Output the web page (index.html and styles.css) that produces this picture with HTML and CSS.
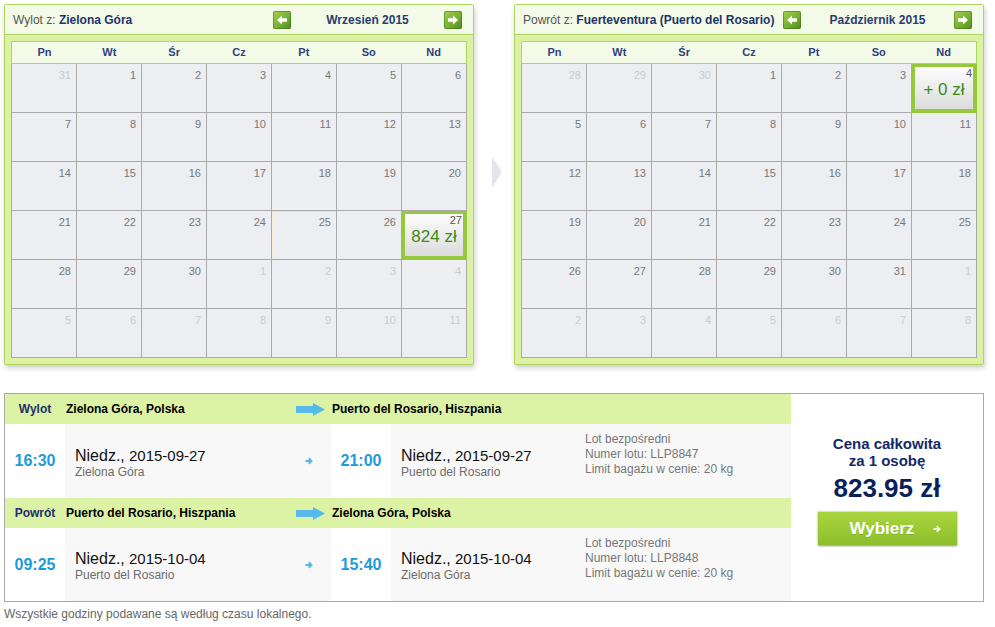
FILE: index.html
```html
<!DOCTYPE html>
<html lang="pl">
<head>
  <meta charset="UTF-8">
  <meta name="viewport" content="width=device-width, initial-scale=1.0">
  <title>Wybór lotu</title>
  <link rel="stylesheet" href="styles.css">
</head>

<body>
  <div class="calendars">
    <!-- wylot -->
    <div class="cal">
      <div class="cal-head">
        <div class="cal-title"><span class="cal-label">Wylot z:</span> <b>Zielona Góra</b></div>
        <div class="cal-nav">
          <span class="nav-btn"><svg width="18" height="18" viewBox="0 0 18 18"><polygon points="4,9 9,4.5 9,7.3 14,7.3 14,10.7 9,10.7 9,13.5" fill="#fff"/></svg></span>
          <span class="cal-month">Wrzesień 2015</span>
          <span class="nav-btn"><svg width="18" height="18" viewBox="0 0 18 18"><polygon points="14,9 9,4.5 9,7.3 4,7.3 4,10.7 9,10.7 9,13.5" fill="#fff"/></svg></span>
        </div>
      </div>
      <div class="cal-body">
        <div class="cal-days">
          <span>Pn</span><span>Wt</span><span>Śr</span><span>Cz</span><span>Pt</span><span>So</span><span>Nd</span>
        </div>
        <div class="cal-grid">
          <div class="day other">31</div><div class="day">1</div><div class="day">2</div><div class="day">3</div><div class="day">4</div><div class="day">5</div><div class="day">6</div>
          <div class="day">7</div><div class="day">8</div><div class="day">9</div><div class="day">10</div><div class="day">11</div><div class="day">12</div><div class="day">13</div>
          <div class="day">14</div><div class="day">15</div><div class="day">16</div><div class="day">17</div><div class="day">18</div><div class="day">19</div><div class="day">20</div>
          <div class="day">21</div><div class="day">22</div><div class="day">23</div><div class="day">24</div><div class="day today">25</div><div class="day">26</div>
          <div class="day picked"><span class="num">27</span><span class="fare">824 zł</span></div>
          <div class="day">28</div><div class="day">29</div><div class="day">30</div><div class="day other">1</div><div class="day other">2</div><div class="day other">3</div><div class="day other">4</div>
          <div class="day other">5</div><div class="day other">6</div><div class="day other">7</div><div class="day other">8</div><div class="day other">9</div><div class="day other">10</div><div class="day other">11</div>
        </div>
      </div>
    </div>

    <div class="cal-gap"><span class="gap-arrow"></span></div>

    <!-- powrót -->
    <div class="cal">
      <div class="cal-head">
        <div class="cal-title"><span class="cal-label">Powrót z:</span> <b>Fuerteventura (Puerto del Rosario)</b></div>
        <div class="cal-nav">
          <span class="nav-btn"><svg width="18" height="18" viewBox="0 0 18 18"><polygon points="4,9 9,4.5 9,7.3 14,7.3 14,10.7 9,10.7 9,13.5" fill="#fff"/></svg></span>
          <span class="cal-month">Październik 2015</span>
          <span class="nav-btn"><svg width="18" height="18" viewBox="0 0 18 18"><polygon points="14,9 9,4.5 9,7.3 4,7.3 4,10.7 9,10.7 9,13.5" fill="#fff"/></svg></span>
        </div>
      </div>
      <div class="cal-body">
        <div class="cal-days">
          <span>Pn</span><span>Wt</span><span>Śr</span><span>Cz</span><span>Pt</span><span>So</span><span>Nd</span>
        </div>
        <div class="cal-grid">
          <div class="day other">28</div><div class="day other">29</div><div class="day other">30</div><div class="day">1</div><div class="day">2</div><div class="day">3</div>
          <div class="day picked"><span class="num">4</span><span class="fare">+ 0 zł</span></div>
          <div class="day">5</div><div class="day">6</div><div class="day">7</div><div class="day">8</div><div class="day">9</div><div class="day">10</div><div class="day">11</div>
          <div class="day">12</div><div class="day">13</div><div class="day">14</div><div class="day">15</div><div class="day">16</div><div class="day">17</div><div class="day">18</div>
          <div class="day">19</div><div class="day">20</div><div class="day">21</div><div class="day">22</div><div class="day">23</div><div class="day">24</div><div class="day">25</div>
          <div class="day">26</div><div class="day">27</div><div class="day">28</div><div class="day">29</div><div class="day">30</div><div class="day">31</div><div class="day other">1</div>
          <div class="day other">2</div><div class="day other">3</div><div class="day other">4</div><div class="day other">5</div><div class="day other">6</div><div class="day other">7</div><div class="day other">8</div>
        </div>
      </div>
    </div>
  </div>

  <div class="flight-box">
    <div class="legs">
      <div class="bar">
        <span class="bar-label">Wylot</span>
        <span class="bar-from">Zielona Góra, Polska
          <svg width="29" height="13" viewBox="0 0 29 13"><polygon points="0,3 17,3 17,0 29,6.5 17,13 17,10 0,10" fill="#56b9ea"/></svg>
        </span>
        <span class="bar-to">Puerto del Rosario, Hiszpania</span>
      </div>
      <div class="leg">
        <div class="time">16:30</div>
        <div class="place">
          <div class="date-block">
            <div class="date"><span class="dow">Niedz.,</span> 2015-09-27</div>
            <div class="city">Zielona Góra</div>
          </div>
          <svg class="go" width="8" height="8" viewBox="0 0 8 8"><path d="M0.5 4H6.5M3.8 1.2L6.6 4L3.8 6.8" stroke="#55b7e6" stroke-width="1.8" fill="none"/></svg>
        </div>
        <div class="time">21:00</div>
        <div class="place wide">
          <div class="date-block">
            <div class="date"><span class="dow">Niedz.,</span> 2015-09-27</div>
            <div class="city">Puerto del Rosario</div>
          </div>
          <div class="notes">Lot bezpośredni<br>Numer lotu: LLP8847<br>Limit bagażu w cenie: 20 kg</div>
        </div>
      </div>

      <div class="bar">
        <span class="bar-label">Powrót</span>
        <span class="bar-from">Puerto del Rosario, Hiszpania
          <svg width="29" height="13" viewBox="0 0 29 13"><polygon points="0,3 17,3 17,0 29,6.5 17,13 17,10 0,10" fill="#56b9ea"/></svg>
        </span>
        <span class="bar-to">Zielona Góra, Polska</span>
      </div>
      <div class="leg last">
        <div class="time">09:25</div>
        <div class="place">
          <div class="date-block">
            <div class="date"><span class="dow">Niedz.,</span> 2015-10-04</div>
            <div class="city">Puerto del Rosario</div>
          </div>
          <svg class="go" width="8" height="8" viewBox="0 0 8 8"><path d="M0.5 4H6.5M3.8 1.2L6.6 4L3.8 6.8" stroke="#55b7e6" stroke-width="1.8" fill="none"/></svg>
        </div>
        <div class="time">15:40</div>
        <div class="place wide">
          <div class="date-block">
            <div class="date"><span class="dow">Niedz.,</span> 2015-10-04</div>
            <div class="city">Zielona Góra</div>
          </div>
          <div class="notes">Lot bezpośredni<br>Numer lotu: LLP8848<br>Limit bagażu w cenie: 20 kg</div>
        </div>
      </div>
    </div>

    <div class="price">
      <div class="price-title">Cena całkowita<br>za 1 osobę</div>
      <div class="price-sum">823.95 zł</div>
      <a class="btn">Wybierz
        <svg width="8" height="8" viewBox="0 0 8 8"><path d="M0.5 4H6.5M3.8 1.2L6.6 4L3.8 6.8" stroke="#fff" stroke-width="1.6" fill="none"/></svg>
      </a>
    </div>
  </div>

  <p class="note">Wszystkie godziny podawane są według czasu lokalnego.</p>
</body>
</html>
```

FILE: styles.css
```css
* {
  box-sizing: border-box;
  padding: 0;
  margin: 0;
}
body {
  padding: 4px;
  font-family: "Liberation Sans", Arial, sans-serif;
  font-size: 12px;
  color: #333;
  background-color: #fff;
}

/* kalendarze */
.calendars {
  display: flex;
  align-items: flex-start;
}
.cal {
  width: 470px;
  border: 1px solid #aed65f;
  border-radius: 2px;
  background-color: #dcf1a4;
  box-shadow: 1px 3px 5px rgba(0, 0, 0, 0.2);
}
.cal-head {
  height: 30px;
  display: flex;
  align-items: center;
  justify-content: space-between;
  padding: 0 11px 0 8px;
  background-color: #f3fbe8;
  border-bottom: 1px solid #aed65f;
  white-space: nowrap;
}
.cal-label { color: #555; }
.cal-title b { color: #23336a; }
.cal-nav {
  width: 189px;
  display: flex;
  align-items: center;
  justify-content: space-between;
}
.cal-month {
  font-weight: bold;
  color: #2b3b72;
}
.nav-btn {
  width: 18px;
  height: 18px;
  border-radius: 2px;
  background: linear-gradient(135deg, #a4d24c 0%, #77b033 55%, #4f8a1e 100%);
  box-shadow: inset 0 0 0 1px rgba(60, 110, 20, 0.5);
}
.nav-btn svg { display: block; }

.cal-body { padding: 6px; }
.cal-days {
  width: 456px;
  height: 23px;
  display: grid;
  grid-template-columns: repeat(7, 1fr);
  border: 1px solid #aed65f;
  background-color: #f3fbe8;
  text-align: center;
  line-height: 21px;
  font-size: 11px;
  font-weight: bold;
  color: #2f3f7c;
}
.cal-grid {
  display: grid;
  grid-template-columns: repeat(7, 65px);
  border-left: 1px solid #aaa;
}
.day {
  height: 49px;
  padding: 5px 5px 0 0;
  border-right: 1px solid #aaa;
  border-bottom: 1px solid #aaa;
  background-color: #eceef1;
  text-align: right;
  font-size: 11px;
  line-height: 13px;
  color: #777;
}
.day.other { color: #c9cbce; }
/* dzisiejszy dzień */
.day.today { box-shadow: inset 0 1px 0 #fbe68a, inset 1px 0 0 #f3efd6; }
.day.picked {
  display: flex;
  flex-direction: column;
  padding: 3px 4px 0 4px;
  border-color: #95c83c;
  box-shadow: inset 0 0 0 3px #95c83c;
  background: linear-gradient(#fff, #d9d9d9);
  color: #555;
}
.fare {
  text-align: center;
  font-size: 17px;
  line-height: 20px;
  color: #3a8a18;
}

.cal-gap {
  width: 40px;
  padding: 153px 0 0 18px;
}
.gap-arrow {
  display: block;
  width: 0;
  height: 0;
  border-left: 10px solid #e2e6eb;
  border-top: 15px solid transparent;
  border-bottom: 16px solid transparent;
}

/* szczegóły lotu */
.flight-box {
  width: 980px;
  margin-top: 28px;
  display: flex;
  border: 1px solid #a9a9a9;
}
.legs { width: 786px; }
.bar {
  height: 30px;
  display: flex;
  align-items: center;
  background-color: #dcf2a4;
  font-weight: bold;
  color: #000;
}
.bar-label {
  width: 60px;
  text-align: center;
  color: #1f2f6a;
}
.bar-from {
  width: 266px;
  display: flex;
  align-items: center;
  justify-content: space-between;
  padding: 0 6px 0 1px;
}
.bar-from svg { display: block; }
.bar-to { padding-left: 1px; }

.leg {
  height: 74px;
  display: flex;
}
.leg.last { height: 73px; }
.time {
  width: 60px;
  display: flex;
  align-items: center;
  justify-content: center;
  background-color: #fff;
  font-size: 16px;
  font-weight: bold;
  color: #1f9ad9;
}
.place {
  width: 266px;
  display: flex;
  align-items: center;
  justify-content: space-between;
  padding: 0 18px 0 10px;
  background-color: #f8f8f8;
}
.place.wide {
  width: 400px;
  justify-content: flex-start;
  padding-right: 0;
}
.date-block { padding-top: 3px; }
.place.wide .date-block { width: 184px; }
.date {
  font-size: 15px;
  line-height: 18px;
  color: #111;
}
.dow { font-size: 16px; }
.city {
  font-size: 12px;
  line-height: 14px;
  color: #6b6b6b;
}
.go { display: block; }
.notes {
  align-self: flex-start;
  padding-top: 8px;
  line-height: 15px;
  color: #777;
}

.price {
  flex: 1;
  display: flex;
  flex-direction: column;
  align-items: center;
  padding-top: 41px;
  background-color: #fff;
}
.price-title {
  text-align: center;
  font-size: 15px;
  line-height: 17px;
  font-weight: bold;
  color: #13296a;
}
.price-sum {
  margin-top: 4px;
  font-size: 26px;
  line-height: 30px;
  font-weight: bold;
  color: #0b1f5c;
}
.btn {
  width: 139px;
  height: 34px;
  margin-top: 8px;
  display: flex;
  align-items: center;
  gap: 19px;
  padding-left: 32px;
  border-top: 1px solid #d8ef8e;
  background: linear-gradient(#a9d53f, #8dbf2b);
  box-shadow: 0 1px 2px rgba(0, 0, 0, 0.45);
  font-size: 17px;
  font-weight: bold;
  color: #fff;
  text-shadow: 0 1px 0 rgba(0, 0, 0, 0.12);
  cursor: pointer;
}
.btn svg { display: block; }

.note {
  margin-top: 5px;
  line-height: 14px;
  color: #666;
}
```
